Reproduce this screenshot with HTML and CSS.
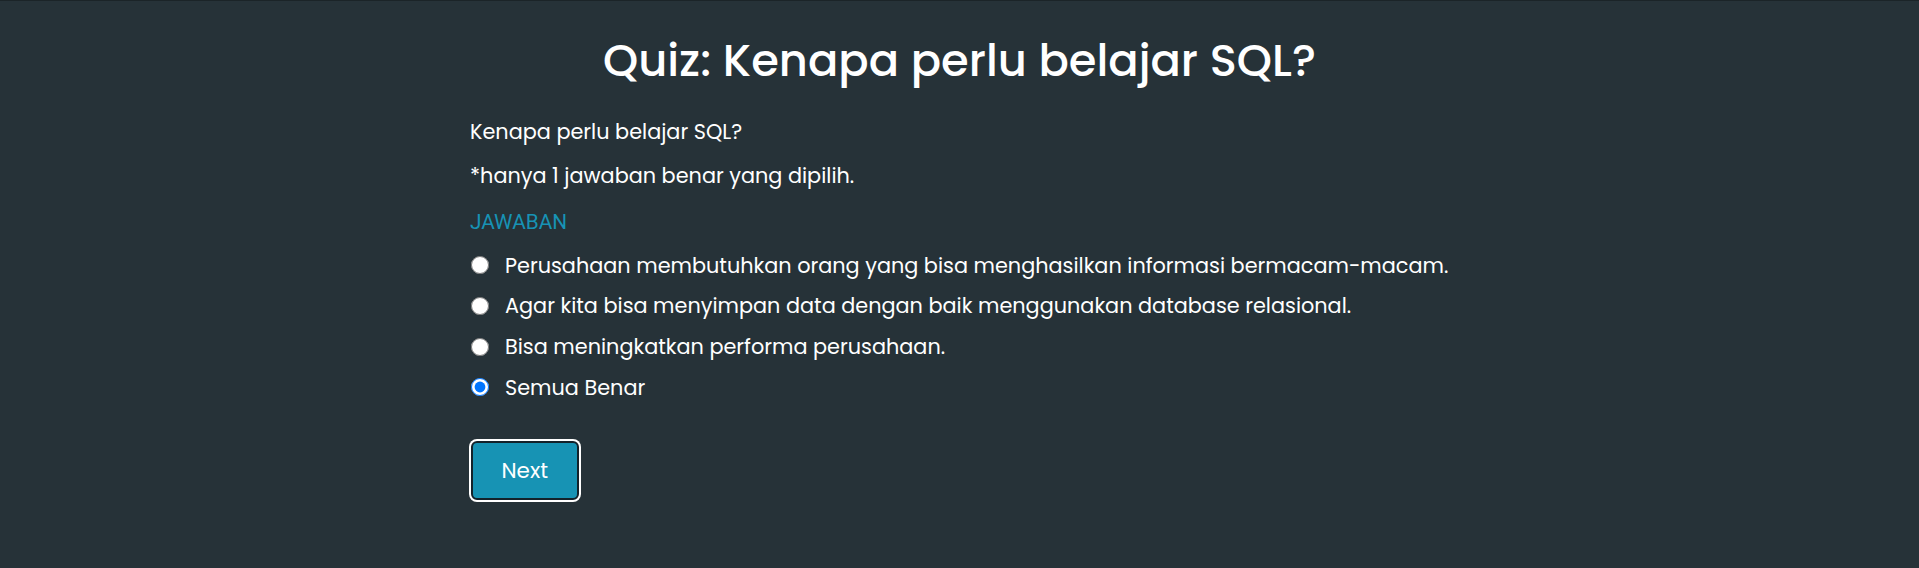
FILE: index.html
```html
<!DOCTYPE html>
<html lang="id">
<head>
<meta charset="utf-8">
<title>Quiz</title>
<link rel="stylesheet" href="styles.css">
</head>
<body>
<main class="page">
  <h1 class="title">Quiz: Kenapa perlu belajar SQL?</h1>
  <section class="quiz">
    <p class="question">Kenapa perlu belajar SQL?</p>
    <p class="note">*hanya 1 jawaban benar yang dipilih.</p>
    <p class="label">JAWABAN</p>
    <div class="options">
      <label class="option"><input type="radio" name="a" class="radio"><span>Perusahaan membutuhkan orang yang bisa menghasilkan informasi bermacam-macam.</span></label>
      <label class="option"><input type="radio" name="a" class="radio"><span>Agar kita bisa menyimpan data dengan baik menggunakan database relasional.</span></label>
      <label class="option"><input type="radio" name="a" class="radio"><span>Bisa meningkatkan performa perusahaan.</span></label>
      <label class="option"><input type="radio" name="a" class="radio" checked><span>Semua Benar</span></label>
    </div>
    <button class="next" type="button">Next</button>
  </section>
</main>
</body>
</html>
```
FILE: styles.css
```css
* { box-sizing: border-box; }
html, body { margin: 0; padding: 0; }
body {
  background: #263238;
  color: #ffffff;
  font-family: Poppins, "Noto Sans", sans-serif;
  min-height: 568px;
  border-top: 1px solid #1b2428;
}
.page {
  width: 979px;
  margin: 0 auto;
  padding-top: 33px;
}
.title {
  margin: 0;
  text-align: center;
  font-size: 44.8px;
  font-weight: 500;
  line-height: 1.2;
}
.quiz {
  display: flex;
  flex-direction: column;
  align-items: flex-start;
  padding-top: 28px;
}
.question, .note {
  margin: 0;
  font-size: 20.8px;
  line-height: 1.5;
}
.note { margin-top: 12.8px; }
.label {
  margin: 16px 0 0;
  font-family: Roboto, sans-serif;
  font-size: 20.8px;
  line-height: 1.5;
  color: #1793b5;
}
.options {
  display: flex;
  flex-direction: column;
  gap: 9.5px;
  margin-top: 11.5px;
}
.option {
  display: flex;
  align-items: center;
  gap: 16px;
  font-size: 20.8px;
  line-height: 1.5;
}
.radio {
  margin: 0 0 0 1px;
  width: 18px;
  height: 18px;
}
.next {
  margin-top: 38px;
  margin-left: 1px;
  padding: 12px 28.5px;
  background: #1793b4;
  color: #fff;
  font-family: Poppins, "Noto Sans", sans-serif;
  font-size: 21.5px;
  line-height: 31px;
  border: 2px solid #13222a;
  border-radius: 6px;
  box-shadow: 0 0 0 2px #ffffff;
}
```
